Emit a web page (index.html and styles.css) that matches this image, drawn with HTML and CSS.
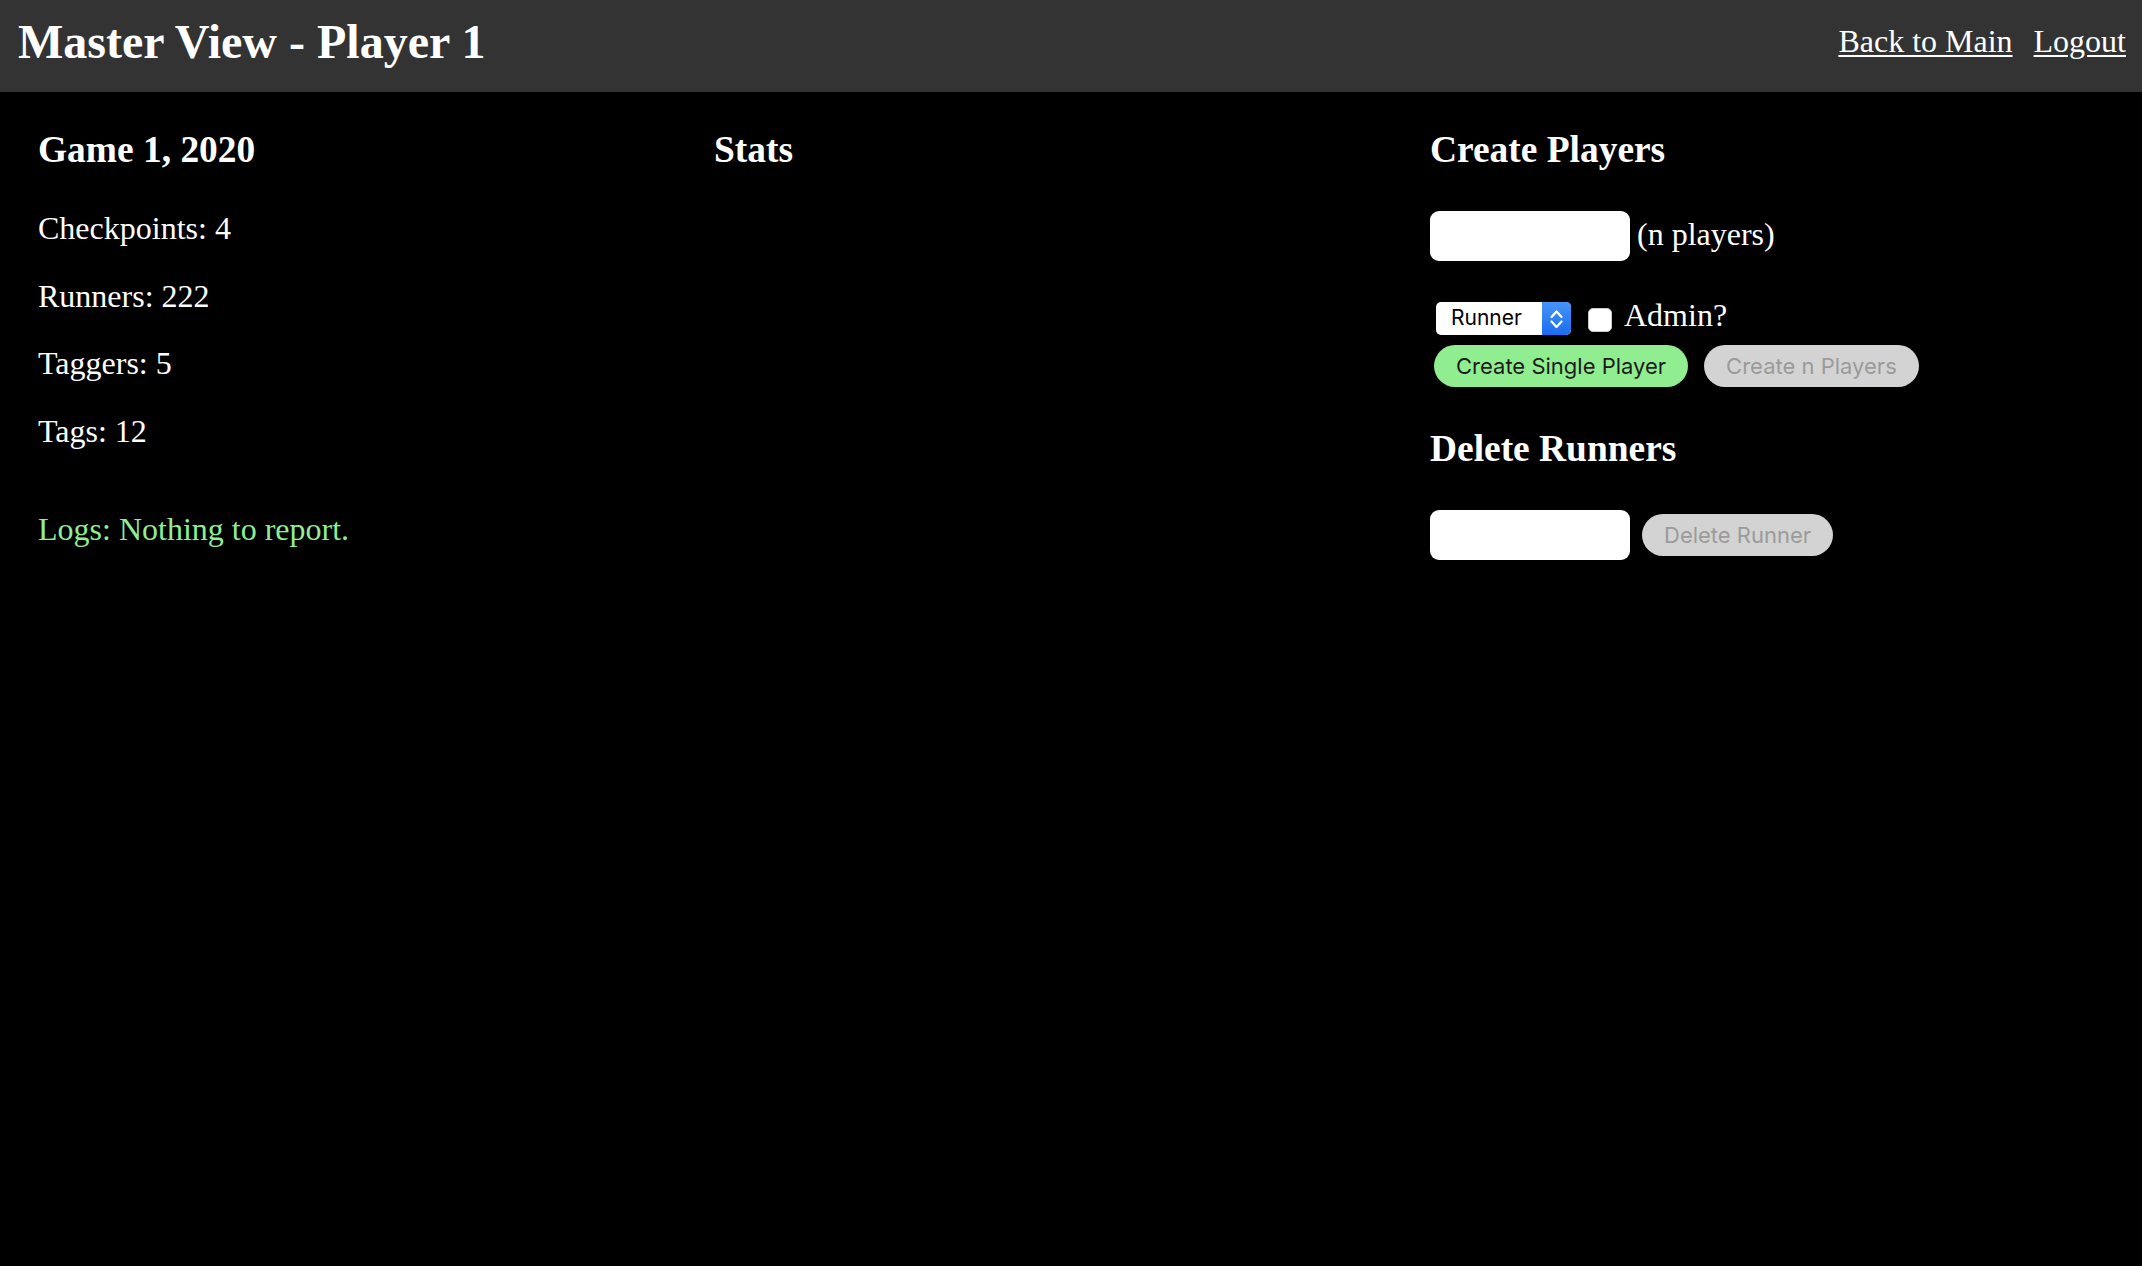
FILE: index.html
```html
<!DOCTYPE html>
<html lang="en">
<head>
<meta charset="utf-8">
<title>Master View - Player 1</title>
<link rel="stylesheet" href="styles.css">
</head>
<body>
<header class="topbar">
  <h1 class="title">Master View - Player 1</h1>
  <nav class="links">
    <a href="#" class="link">Back to Main</a>
    <a href="#" class="link">Logout</a>
  </nav>
</header>
<main class="grid">
  <section class="col col-info">
    <h3 class="heading">Game 1, 2020</h3>
    <p class="stat">Checkpoints: 4</p>
    <p class="stat">Runners: 222</p>
    <p class="stat">Taggers: 5</p>
    <p class="stat">Tags: 12</p>
    <p class="stat logs">Logs: Nothing to report.</p>
  </section>
  <section class="col col-stats">
    <h3 class="heading">Stats</h3>
  </section>
  <section class="col col-admin">
    <h3 class="heading">Create Players</h3>
    <div class="row row-n">
      <input class="field" type="text">
      <span class="label label-n">(n players)</span>
    </div>
    <div class="row row-type">
      <span class="select-wrap">
        <select class="select"><option>Runner</option><option>Tagger</option></select>
        <span class="select-arrow">
          <svg width="29" height="33" viewBox="0 0 29 33" aria-hidden="true">
            <polyline points="9.5,15 14.5,9.5 19.5,15" fill="none" stroke="#fff" stroke-width="2.3" stroke-linecap="round" stroke-linejoin="round"/>
            <polyline points="9.5,19.5 14.5,25 19.5,19.5" fill="none" stroke="#fff" stroke-width="2.3" stroke-linecap="round" stroke-linejoin="round"/>
          </svg>
        </span>
      </span>
      <input class="check" type="checkbox">
      <span class="label label-admin">Admin?</span>
    </div>
    <div class="row row-buttons">
      <button class="btn btn-green" type="button">Create Single Player</button>
      <button class="btn btn-disabled" type="button" disabled>Create n Players</button>
    </div>
    <h3 class="heading heading-delete">Delete Runners</h3>
    <div class="row row-delete">
      <input class="field" type="text">
      <button class="btn btn-disabled btn-delete" type="button" disabled>Delete Runner</button>
    </div>
  </section>
</main>
</body>
</html>
```
FILE: styles.css
```css
html, body {
  margin: 0;
  padding: 0;
  background: #000;
}

body {
  font-family: "Liberation Serif", "Times New Roman", serif;
  font-size: 32px;
  color: #fff;
  min-height: 1266px;
}

.topbar {
  box-sizing: border-box;
  height: 92px;
  background: #333;
  display: flex;
  justify-content: space-between;
  align-items: center;
  padding: 0 16px 10px 18px;
}

.title {
  margin: 0;
  font-size: 48px;
  line-height: 55px;
  font-weight: bold;
}

.links {
  display: flex;
  gap: 21px;
  margin-top: -1px;
}

.link {
  color: #fff;
  font-size: 32px;
  line-height: 36px;
  text-decoration: underline;
  text-decoration-thickness: 2px;
  text-underline-offset: 3px;
}

.grid {
  display: grid;
  grid-template-columns: repeat(3, 1fr);
}

.col-info {
  padding-left: 38px;
}

.col-admin {
  padding-left: 2px;
}

.heading {
  font-size: 37.44px;
  line-height: 43px;
  font-weight: bold;
  margin: 36px 0 40px;
}

.heading-delete {
  margin: 40px 0 40px;
}

.stat {
  margin: 0 0 32px;
  line-height: 35.5px;
}

.logs {
  margin-top: 63px;
  color: #90ee90;
}

.row {
  display: flex;
}

.field {
  box-sizing: border-box;
  width: 200px;
  height: 50px;
  border: none;
  border-radius: 9px;
  background: #fff;
  margin: 0;
  padding: 0 12px;
  font-family: "Inter", "Liberation Sans", sans-serif;
  font-size: 20px;
}

.label {
  line-height: 35.5px;
}

.row-n {
  align-items: flex-start;
  gap: 7px;
}

.label-n {
  margin-top: 5.5px;
}

.row-type {
  align-items: flex-start;
  margin-top: 41px;
}

.select-wrap {
  position: relative;
  display: block;
  width: 135px;
  height: 33px;
  margin-left: 6px;
}

.select {
  -webkit-appearance: none;
  appearance: none;
  display: block;
  box-sizing: border-box;
  width: 135px;
  height: 33px;
  margin: 0;
  border: none;
  border-radius: 5px;
  background: #fff;
  color: #000;
  padding: 0 0 3px 15px;
  font-family: "Inter", "Liberation Sans", sans-serif;
  font-size: 21px;
}

.select-arrow {
  position: absolute;
  right: 0;
  top: 0;
  width: 29px;
  height: 33px;
  border-radius: 0 5px 5px 0;
  background: linear-gradient(#4694f8, #1b6cf2);
  display: flex;
  pointer-events: none;
}

.check {
  -webkit-appearance: none;
  appearance: none;
  box-sizing: border-box;
  width: 24px;
  height: 24px;
  margin: 6px 0 0 17px;
  border: 1px solid #c9c9c9;
  border-radius: 5px;
  background: #fff;
}

.label-admin {
  margin: -4px 0 0 12px;
}

.row-buttons {
  margin-top: 10px;
  gap: 16px;
  padding-left: 4px;
}

.btn {
  box-sizing: border-box;
  height: 42px;
  padding: 0 22px;
  border: none;
  border-radius: 21px;
  font-family: "Inter", "Liberation Sans", sans-serif;
  font-size: 22px;
  margin: 0;
}

.btn-green {
  background: #90ee90;
  color: #1c1c1c;
}

.btn-disabled {
  background: #d3d3d3;
  color: #9b9b9b;
}

.row-delete {
  align-items: center;
  gap: 12px;
}
```
